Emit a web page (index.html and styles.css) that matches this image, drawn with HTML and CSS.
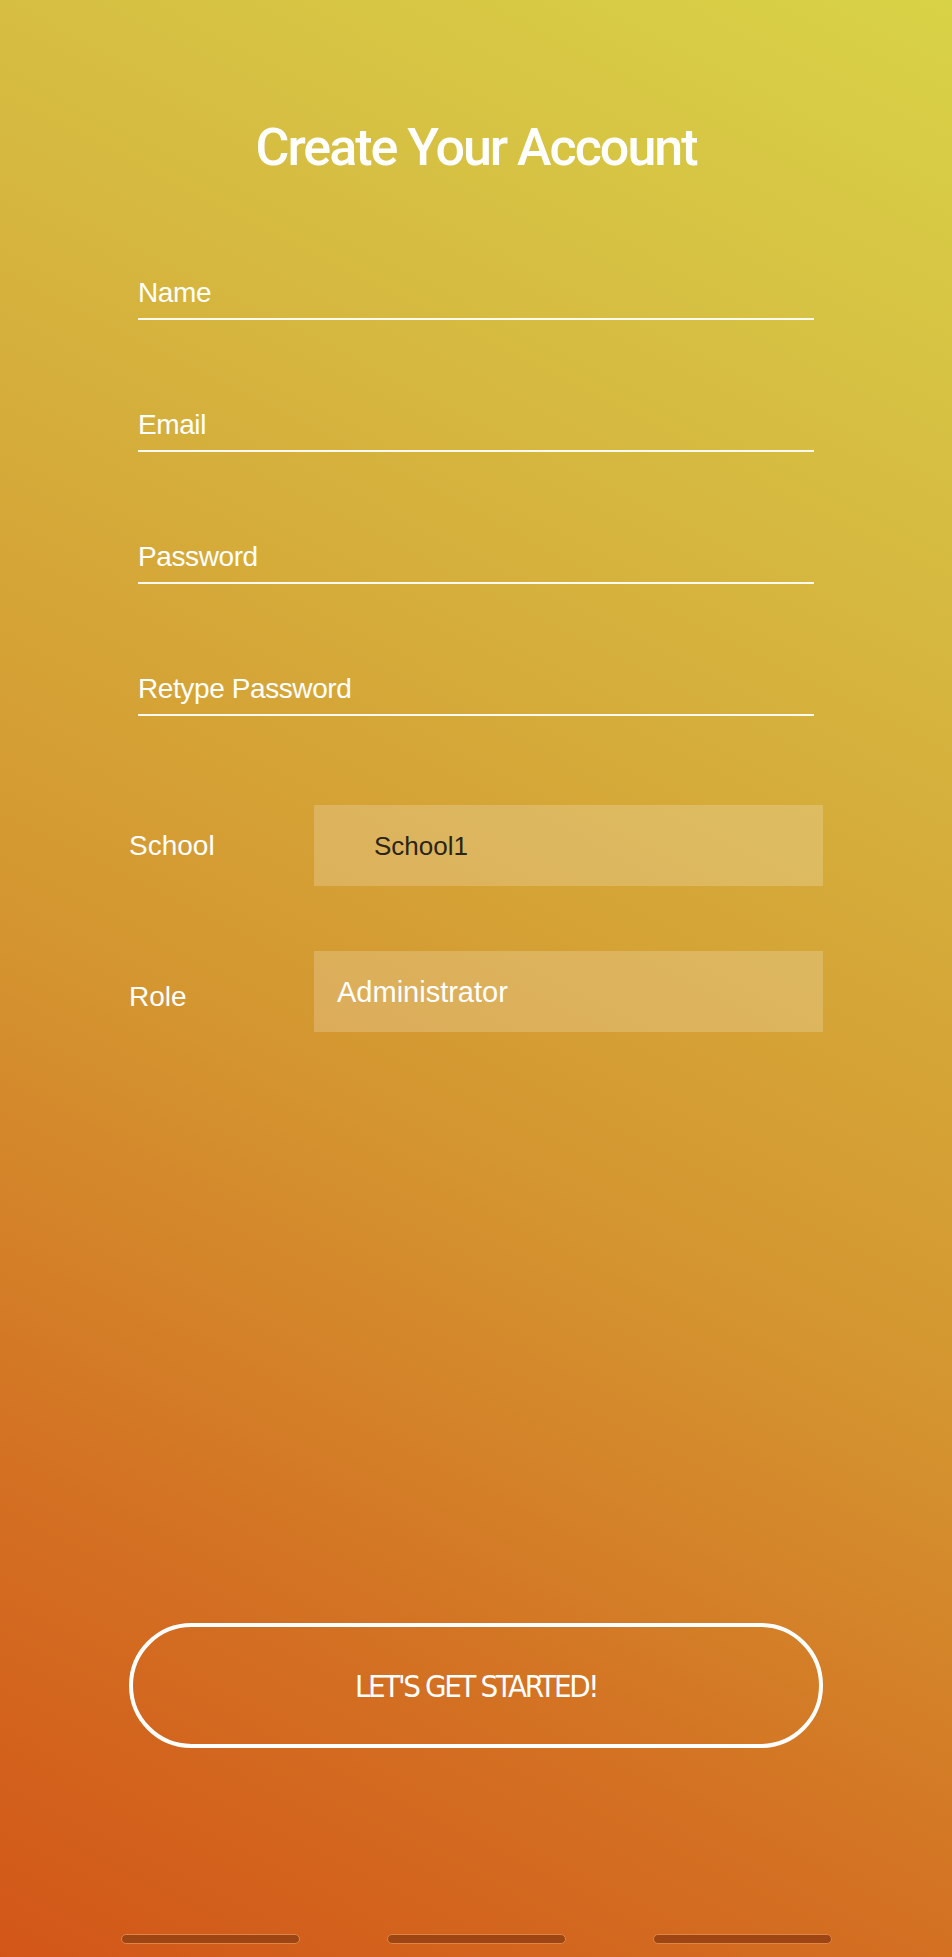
FILE: index.html
```html
<!DOCTYPE html>
<html lang="en">
<head>
<meta charset="utf-8">
<title>Create Your Account</title>
<link rel="stylesheet" href="styles.css">
</head>
<body>
<div class="screen">
  <h1 class="title">Create Your Account</h1>

  <div class="form">
    <div class="field"><span class="field-label">Name</span></div>
    <div class="field"><span class="field-label">Email</span></div>
    <div class="field"><span class="field-label">Password</span></div>
    <div class="field"><span class="field-label">Retype Password</span></div>
  </div>

  <div class="rows">
    <div class="row">
      <div class="row-label">School</div>
      <div class="row-box row-box--select"><span class="row-value row-value--dark">School1</span></div>
    </div>
    <div class="row">
      <div class="row-label row-label--low">Role</div>
      <div class="row-box row-box--input"><span class="row-value">Administrator</span></div>
    </div>
  </div>

  <button class="start-btn" type="button">LET'S GET STARTED!</button>

  <div class="nav-bars">
    <span class="nav-bar"></span>
    <span class="nav-bar"></span>
    <span class="nav-bar"></span>
  </div>
</div>
</body>
</html>
```

FILE: styles.css
```css
html, body {
  margin: 0;
  padding: 0;
}

body {
  font-family: "Liberation Sans", Arial, sans-serif;
  color: #ffffff;
}

.screen {
  width: 952px;
  height: 1957px;
  box-sizing: border-box;
  padding-top: 122px;
  display: flex;
  flex-direction: column;
  align-items: center;
  overflow: hidden;
  background: linear-gradient(27deg,
    #d25618 0%,
    #d37022 20%,
    #d49630 43%,
    #d6be42 80%,
    #d8d246 100%);
}

.title {
  margin: 0;
  font-family: Roboto, "Liberation Sans", sans-serif;
  font-weight: 500;
  font-size: 52px;
  line-height: 52px;
  letter-spacing: -2px;
  color: #ffffff;
  text-align: center;
}

.form {
  width: 676px;
  margin-top: 102px;
  display: flex;
  flex-direction: column;
  gap: 88px;
}

.field {
  font-size: 28px;
  line-height: 34px;
  letter-spacing: -0.4px;
  padding-bottom: 8px;
  border-bottom: 2px solid #fffaf0;
}

.rows {
  width: 694px;
  margin-top: 89px;
  display: flex;
  flex-direction: column;
  gap: 65px;
}

.row {
  height: 81px;
  display: flex;
  align-items: center;
}

.row-label {
  width: 185px;
  font-size: 28px;
  line-height: 34px;
}

.row-label--low {
  padding-top: 10px;
}

.row-box {
  flex: 1;
  height: 81px;
  display: flex;
  align-items: center;
  background: rgba(255, 255, 255, 0.2);
  box-sizing: border-box;
}

.row-box--select {
  padding-left: 60px;
}

.row-box--input {
  padding-left: 23px;
}

.row-value {
  font-size: 29px;
  line-height: 34px;
  color: #ffffff;
}

.row-value--dark {
  font-size: 26px;
  color: #2b2418;
}

.start-btn {
  margin-top: 591px;
  width: 694px;
  height: 125px;
  box-sizing: border-box;
  border: 4px solid #ffffff;
  border-radius: 63px;
  background: transparent;
  color: #ffffff;
  display: flex;
  align-items: center;
  justify-content: center;
  padding: 0;
  font-family: "Liberation Sans Narrow", "DejaVu Sans Condensed", "Liberation Sans", sans-serif;
  font-size: 31px;
  letter-spacing: -2.4px;
  line-height: 34px;
}

.nav-bars {
  margin-top: 186px;
  display: flex;
  gap: 87px;
}

.nav-bar {
  width: 179px;
  height: 10px;
  box-sizing: border-box;
  border-radius: 5px;
  background: #9e4514;
  border: 1px solid #e08545;
}
```
